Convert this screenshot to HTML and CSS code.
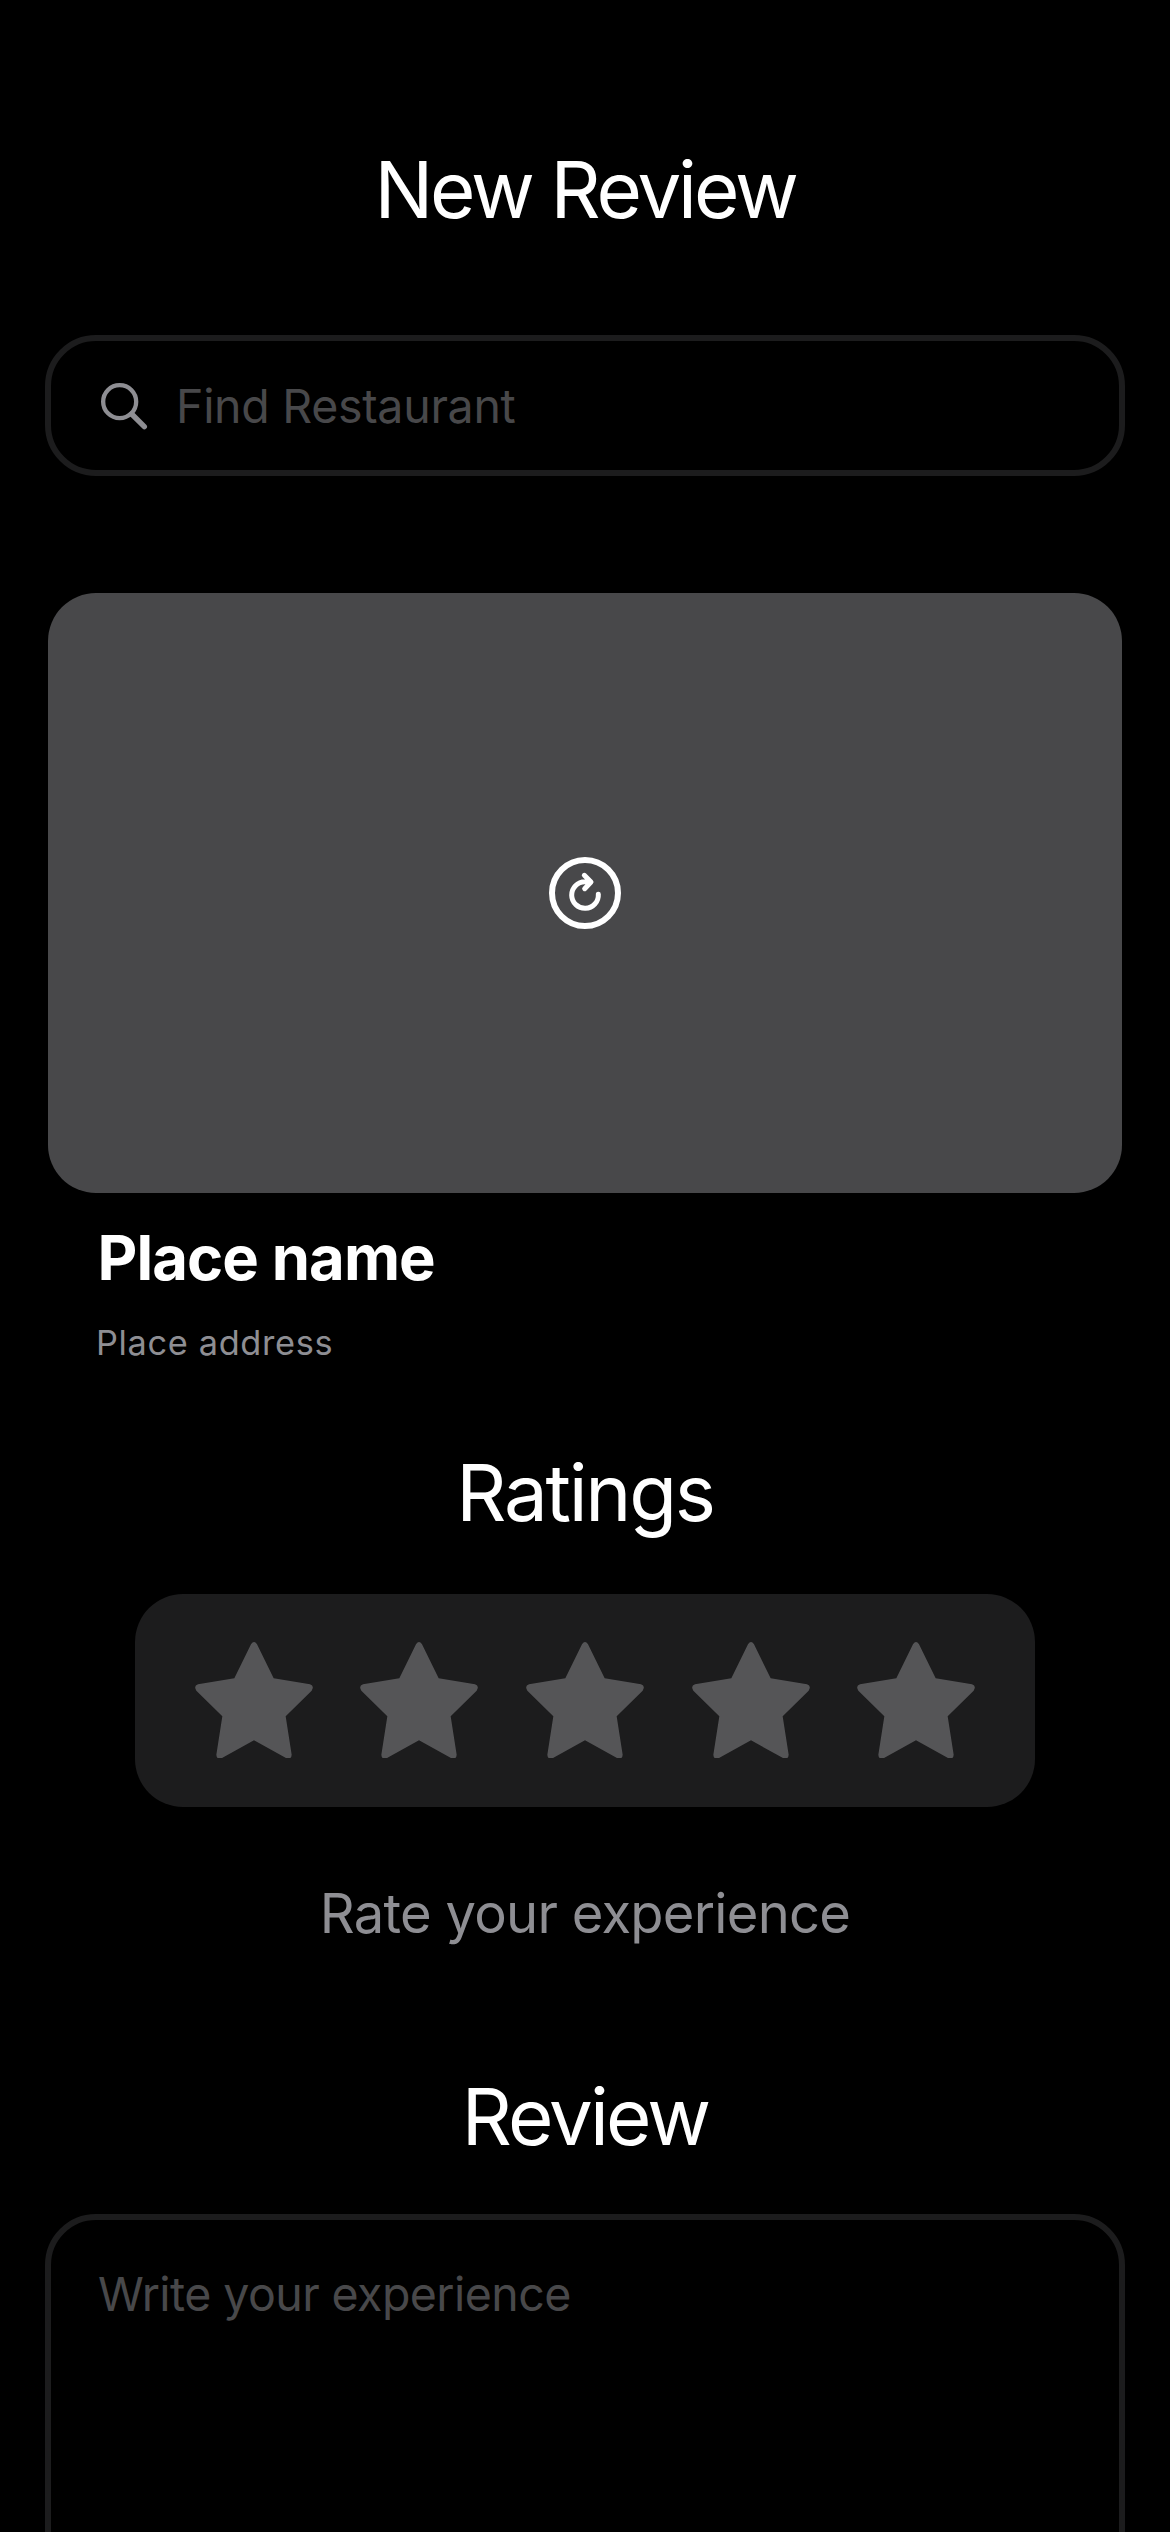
FILE: index.html
```html
<!DOCTYPE html>
<html lang="en">
<head>
<meta charset="utf-8">
<title>New Review</title>
<link rel="stylesheet" href="styles.css">
</head>
<body>
<svg class="defs" aria-hidden="true">
  <symbol id="star" viewBox="0 0 354 350">
    <path d="M168 7Q177-7 186 7L236 109L345 127Q359 131 350 146L272 223L290 338Q289 354 273 348L177 295L81 348Q65 354 64 338L82 223L4 146Q-5 131 9 127L118 109Z"/>
  </symbol>
</svg>
<main class="screen">
  <h1 class="title title-main">New Review</h1>
  <div class="field search">
    <svg class="search-icon" viewBox="0 0 144 144">
      <circle cx="59" cy="59" r="49.5" stroke-width="13"/>
      <path d="M95 96L133 134" stroke-width="16"/>
    </svg>
    <span class="placeholder find">Find Restaurant</span>
  </div>
  <section class="photo">
    <svg class="reload" viewBox="0 0 216 216">
      <circle cx="108" cy="108" r="99" stroke-width="18"/>
      <path d="M148 112A40 40 0 1 1 108 74H122M106 55L126 75L107 95" stroke-width="15"/>
    </svg>
  </section>
  <section class="place">
    <h2 class="place-name">Place name</h2>
    <p class="place-address">Place address</p>
  </section>
  <h2 class="title title-ratings">Ratings</h2>
  <div class="stars">
    <svg class="star"><use href="#star"/></svg>
    <svg class="star"><use href="#star"/></svg>
    <svg class="star"><use href="#star"/></svg>
    <svg class="star"><use href="#star"/></svg>
    <svg class="star"><use href="#star"/></svg>
  </div>
  <p class="hint">Rate your experience</p>
  <h2 class="title title-review">Review</h2>
  <div class="field review"><span class="placeholder write">Write your experience</span></div>
</main>
</body>
</html>
```
FILE: styles.css
```css
* { box-sizing: border-box; margin: 0; padding: 0; }
body { background: #000; }
.defs { display: none; }
.screen {
  display: flex;
  flex-direction: column;
  height: 2532px;
  padding: 142px 45px 0;
  overflow: hidden;
  background: #000;
  color: #fff;
  font-family: Inter, sans-serif;
  white-space: nowrap;
}
.screen > * { flex-shrink: 0; }
.title {
  font-size: 78px;
  line-height: 96px;
  font-weight: 400;
  text-align: center;
}
.title-main { letter-spacing: -3.1px; }
.field { border: 6px solid #1c1c1d; border-radius: 51px; }
.placeholder { color: #48484a; font-size: 46.5px; line-height: 56px; }
.find { letter-spacing: -0.3px; }
.write { letter-spacing: -0.57px; }
.search {
  display: flex;
  align-items: center;
  gap: 28px;
  height: 141px;
  margin-top: 97px;
  padding-left: 49px;
}
.search-icon { width: 48px; height: 48px; fill: none; stroke: #8e8e93; stroke-linecap: round; }
.photo {
  display: flex;
  align-items: center;
  justify-content: center;
  height: 600px;
  margin: 117px 3px 0;
  border-radius: 48px;
  background: #48484a;
}
.reload { width: 72px; height: 72px; fill: none; stroke: #fff; stroke-linecap: round; stroke-linejoin: round; }
.place { padding: 29px 51px 0; }
.place-name { padding-left: 1.5px; font-size: 61.5px; line-height: 72px; font-weight: 700; letter-spacing: -0.9px; }
.place-address { margin-top: 28px; font-size: 34.3px; line-height: 42px; color: #8e8e93; letter-spacing: 0.67px; }
.title-ratings { margin-top: 81px; letter-spacing: -2.25px; }
.stars {
  display: flex;
  justify-content: center;
  gap: 47.6px;
  height: 213px;
  margin: 53px 90px 0;
  padding-top: 47.7px;
  border-radius: 48px;
  background: #1c1c1d;
}
.star { width: 118px; height: 116.7px; fill: #555557; }
.hint { margin-top: 74px; font-size: 54.3px; line-height: 64px; text-align: center; color: #8e8e93; letter-spacing: -0.72px; }
.title-review { margin-top: 124px; letter-spacing: -2.85px; }
.review { height: 420px; margin-top: 49px; padding: 46px 47px; }
```
